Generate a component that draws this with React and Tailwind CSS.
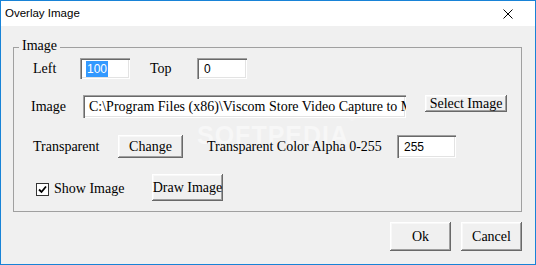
import React from 'react';

const serif = "font-['Liberation_Serif',serif] text-[14px] text-black leading-none";
const sans = "font-['Liberation_Sans',Arial,sans-serif] text-[12px] text-black leading-none";

const btn =
  'flex items-center justify-center bg-[#f0f0f0] shadow-[inset_-1px_-1px_#696969,inset_1px_1px_#ffffff,inset_-2px_-2px_#a0a0a0,inset_2px_2px_#f8f8f8]';
const field =
  'flex items-center bg-white shadow-[inset_1px_1px_#a0a0a0,inset_2px_2px_#696969,inset_-1px_-1px_#ffffff,inset_-2px_-2px_#e3e3e3]';

const Button = ({ className = '', children }) => (
  <div className={`${btn} ${serif} ${className}`}>{children}</div>
);

const App = () => {
  return (
    <div className="w-[536px] h-[265px] border border-[#1883d7] bg-[#f0f0f0] flex flex-col overflow-hidden">
      {/* Title bar */}
      <div className="h-[25px] bg-white flex items-center justify-between pl-[4px] pr-[22px] shrink-0">
        <span className="font-['Liberation_Sans',Arial,sans-serif] text-[11.5px] text-black">Overlay Image</span>
        <svg width="10" height="10" viewBox="0 0 10 10" className="mt-[1px]">
          <path d="M0.5 0.5 L9.5 9.5 M9.5 0.5 L0.5 9.5" stroke="#000" strokeWidth="1" fill="none" />
        </svg>
      </div>

      {/* Body */}
      <div className="relative flex-1 flex flex-col pl-[12px] pr-[12px] pt-[21px]">
        {/* Group box */}
        <div className="relative w-[509px] h-[165px] border border-[#a0a0a0] flex flex-col">
          {/* Watermark (behind the controls) */}
          <span className="absolute left-[183px] top-[75px] font-['Liberation_Sans',Arial,sans-serif] font-bold text-[25px] leading-none tracking-[1px] text-[#f7f7f7] select-none">
            SOFTPEDIA<sup className="text-[8px] align-top">®</sup>
          </span>

          <span className={`absolute left-[5px] top-[-9px] px-[3px] bg-[#f0f0f0] ${serif}`}>Image</span>

          {/* Row 1 */}
          <div className="relative flex items-center h-[21px] mt-[10px] pl-[19px]">
            <span className={`w-[47px] ${serif}`}>Left</span>
            <div className={`w-[50px] h-[21px] ${field} pl-[6px]`}>
              <span className={`${sans} bg-[#3399ff] text-white px-[1px] py-[2px]`}>100</span>
            </div>
            <span className={`w-[47px] ml-[20px] ${serif}`}>Top</span>
            <div className={`w-[50px] h-[21px] ${field} pl-[7px]`}>
              <span className={sans}>0</span>
            </div>
          </div>

          {/* Row 2 */}
          <div className="relative flex items-start h-[23px] mt-[16px] pl-[17px]">
            <span className={`w-[52px] self-center ${serif}`}>Image</span>
            <div className={`w-[323px] h-[23px] ${field} pl-[6px] overflow-hidden whitespace-nowrap`}>
              <span className={serif}>C:\Program Files (x86)\Viscom Store Video Capture to MI</span>
            </div>
            <Button className="w-[82px] h-[17px] ml-[19px]">Select Image</Button>
          </div>

          {/* Row 3 */}
          <div className="relative flex items-center h-[23px] mt-[17px] pl-[19px]">
            <span className={`w-[85px] ${serif}`}>Transparent</span>
            <Button className="w-[65px] h-[23px]">Change</Button>
            <span className={`w-[190px] ml-[24px] ${serif}`}>Transparent Color Alpha 0-255</span>
            <div className={`w-[59px] h-[23px] ${field} pl-[7px]`}>
              <span className={sans}>255</span>
            </div>
          </div>

          {/* Row 4 */}
          <div className="relative flex items-center h-[27px] mt-[16px] pl-[22px]">
            <div className="w-[13px] h-[13px] mt-[3px] bg-white border border-[#333333] flex items-center justify-center">
              <svg width="9" height="9" viewBox="0 0 9 9">
                <path d="M1 4.5 L3.5 7 L8 1.5" stroke="#000" strokeWidth="1.8" fill="none" />
              </svg>
            </div>
            <span className={`ml-[5px] w-[98px] mt-[3px] ${serif}`}>Show Image</span>
            <Button className="w-[71px] h-[27px]">Draw Image</Button>
          </div>
        </div>

        {/* Bottom buttons */}
        <div className="flex justify-end gap-[10px] mt-[10px] pr-[1px]">
          <Button className="w-[61px] h-[29px]">Ok</Button>
          <Button className="w-[61px] h-[29px]">Cancel</Button>
        </div>
      </div>
    </div>
  );
};

export default App;
